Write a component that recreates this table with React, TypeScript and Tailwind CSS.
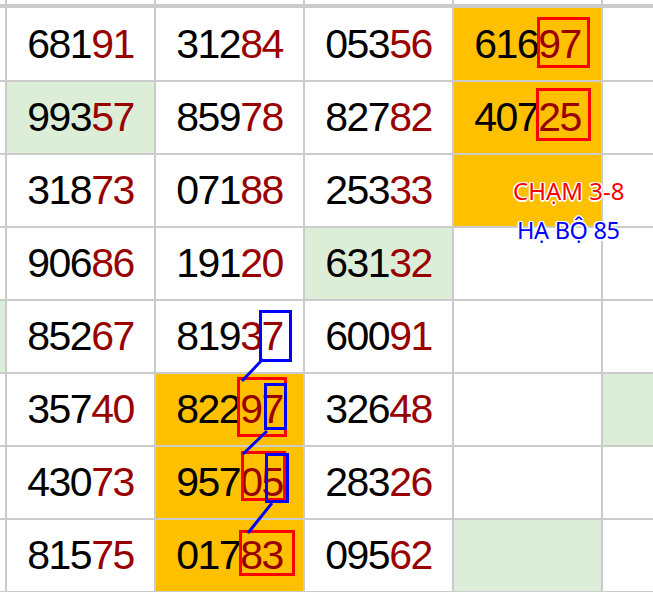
import React from 'react';

type Fill = 'none' | 'orange' | 'green';

const rows: string[][] = [
  ['', '68191', '31284', '05356', '61697', ''],
  ['', '99357', '85978', '82782', '40725', ''],
  ['', '31873', '07188', '25333', '', ''],
  ['', '90686', '19120', '63132', '', ''],
  ['', '85267', '81937', '60091', '', ''],
  ['', '35740', '82297', '32648', '', ''],
  ['', '43073', '95705', '28326', '', ''],
  ['', '81575', '01783', '09562', '', ''],
];

// fills by "row-col"
const fills: Record<string, Fill> = {
  '0-4': 'orange',
  '1-1': 'green',
  '1-4': 'orange',
  '2-4': 'orange',
  '3-3': 'green',
  '4-0': 'green',
  '5-2': 'orange',
  '5-5': 'green',
  '6-2': 'orange',
  '7-2': 'orange',
  '7-4': 'green',
};

const fillClass = (f: Fill) =>
  f === 'orange' ? 'bg-[#ffc000]' : f === 'green' ? 'bg-[#ddeed8]' : 'bg-white';

const Cell: React.FC<{ value: string; fill: Fill; tall: boolean }> = ({ value, fill, tall }) => (
  <div
    className={`${fillClass(fill)} ${tall ? 'h-[72px]' : 'h-[71px]'} flex items-center justify-center font-['Liberation_Sans',Arial,sans-serif] text-[41px] tracking-[-1.5px] leading-none`}
  >
    {value && (
      <span>
        <span className="text-black">{value.slice(0, 3)}</span>
        <span className="text-[#990000]">{value.slice(3)}</span>
      </span>
    )}
  </div>
);

const Marks: React.FC = () => (
  <svg className="absolute inset-0 pointer-events-none" width={653} height={592} viewBox="0 0 653 592">
    <g fill="none" stroke="#ff0000" strokeWidth={3}>
      <rect x={538.5} y={18.5} width={50} height={48} />
      <rect x={537.5} y={89.5} width={52} height={50} />
      <rect x={238.5} y={378.5} width={47} height={57} />
      <rect x={242.5} y={452.5} width={42} height={47} />
      <rect x={240.5} y={531.5} width={53} height={43} />
    </g>
    <g fill="none" stroke="#0000ff" strokeWidth={3}>
      <rect x={260.5} y={311.5} width={30} height={49} />
      <line x1={263} y1={359} x2={242} y2={381} />
      <rect x={265.5} y={384.5} width={20} height={44} />
      <line x1={267} y1={431} x2={243} y2={454} />
      <rect x={266.5} y={454.5} width={21} height={47} />
      <line x1={272} y1={503} x2={248} y2={533} />
    </g>
  </svg>
);

const outline =
  "[text-shadow:1.5px_0_0_#fff,-1.5px_0_0_#fff,0_1.5px_0_#fff,0_-1.5px_0_#fff,1px_1px_0_#fff,-1px_-1px_0_#fff,1px_-1px_0_#fff,-1px_1px_0_#fff]";

export default function App() {
  return (
    <div className="relative w-[653px] h-[592px] overflow-hidden bg-[#cbcbcb]">
      {/* partial row above the frozen header line */}
      <div className="grid grid-cols-[5px_147px_147px_147px_147px_1fr] gap-x-[2px] h-[4px]">
        {Array.from({ length: 6 }).map((_, i) => (
          <div key={i} className="bg-white" />
        ))}
      </div>
      <div className="grid grid-cols-[5px_147px_147px_147px_147px_1fr] gap-[2px] mt-[4px]">
        {rows.map((row, r) =>
          row.map((v, c) => (
            <Cell key={`${r}-${c}`} value={v} fill={fills[`${r}-${c}`] ?? 'none'} tall={r === 0} />
          ))
        )}
      </div>

      <Marks />

      <div
        className={`absolute left-[513px] top-[179px] font-['Noto_Sans','Open_Sans',sans-serif] text-[24px] leading-none text-[#ff0000] whitespace-nowrap ${outline}`}
      >
        CHẠM 3-8
      </div>
      <div
        className={`absolute left-[517px] top-[219px] font-['Noto_Sans','Open_Sans',sans-serif] text-[23.5px] tracking-[-0.3px] leading-none text-[#0000ff] whitespace-nowrap ${outline}`}
      >
        HẠ BỘ 85
      </div>
    </div>
  );
}
